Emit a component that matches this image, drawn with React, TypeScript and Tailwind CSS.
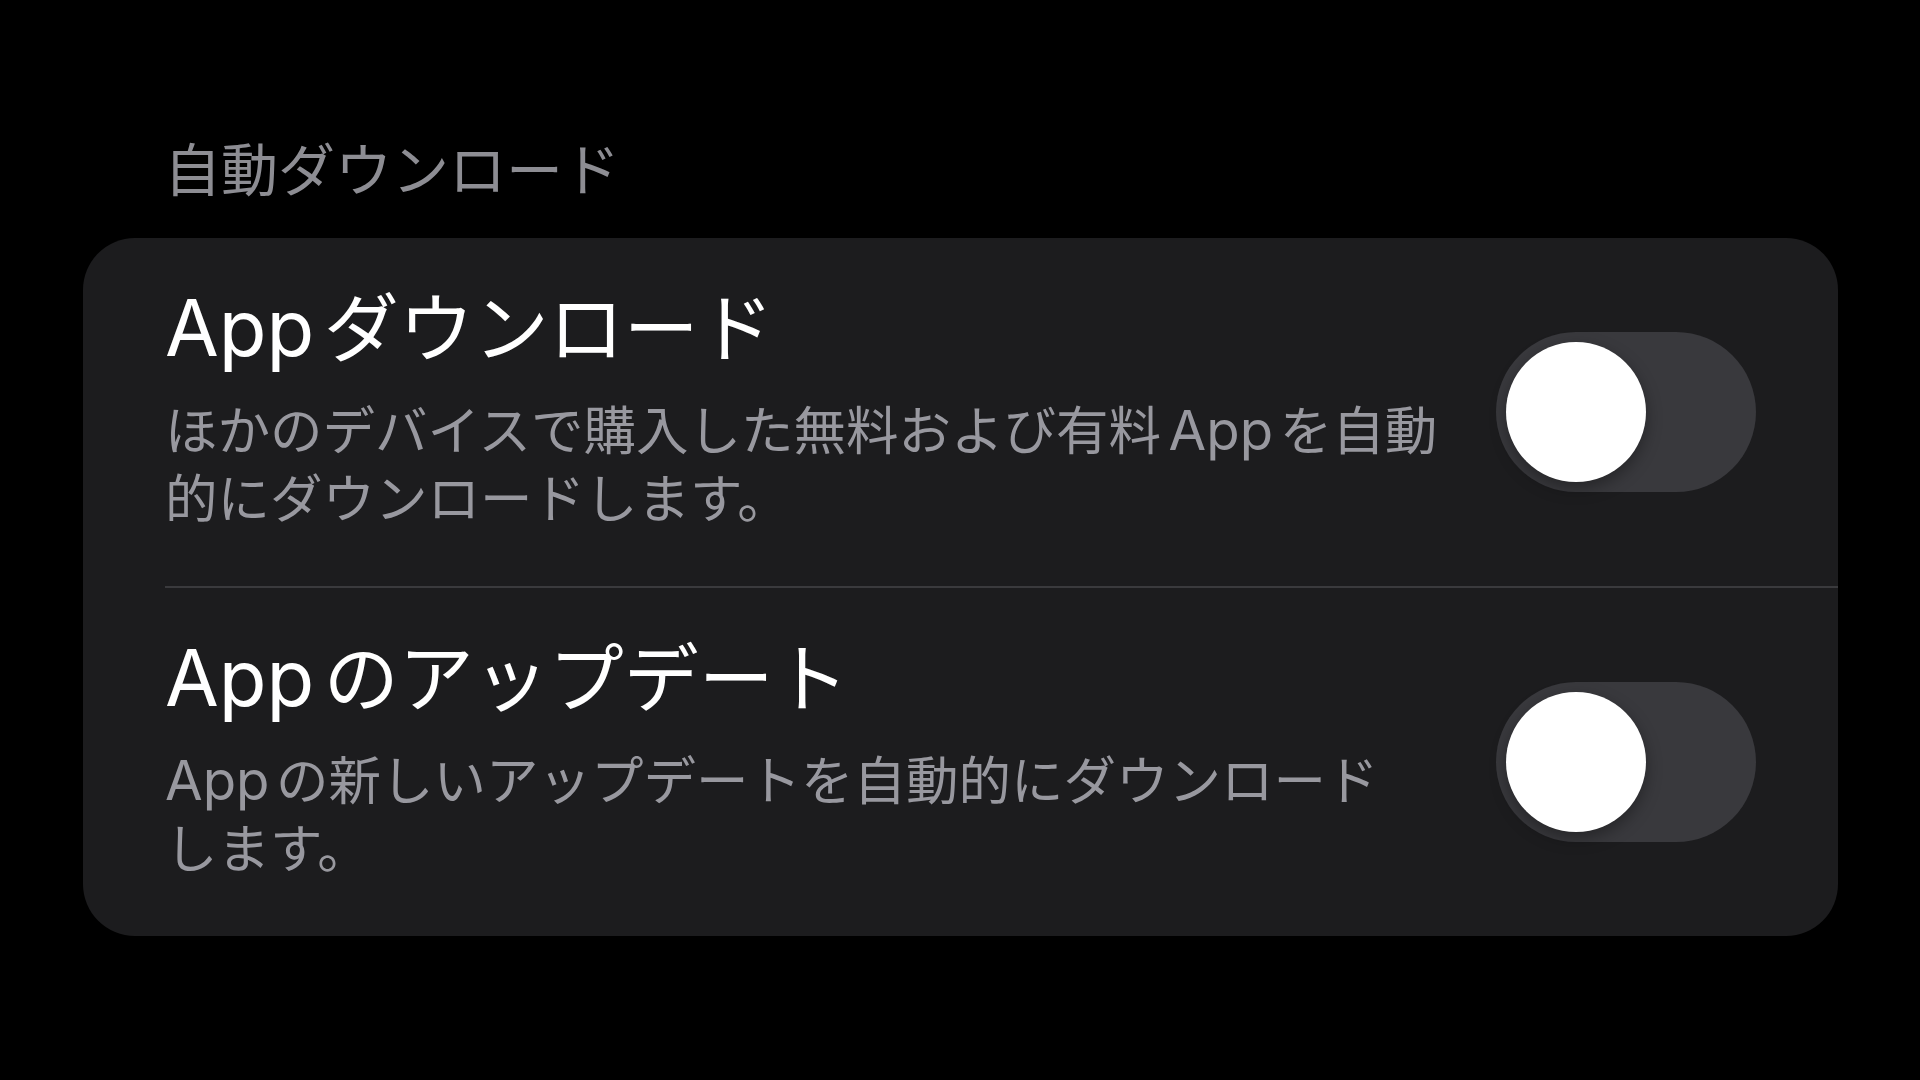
import { useState } from 'react';

interface ToggleRowProps {
  title: React.ReactNode;
  lines: React.ReactNode[];
  on: boolean;
  onToggle: () => void;
  last?: boolean;
}

// Latin "App" inside Japanese text gets a little breathing room, like iOS does
function Latin({ children, lead }: { children: React.ReactNode; lead?: boolean }) {
  return <span className={`mr-[0.12em] text-[1.04em] ${lead ? '' : 'ml-[0.14em]'}`}>{children}</span>;
}

function Toggle({ on, onToggle }: { on: boolean; onToggle: () => void }) {
  return (
    <button
      type="button"
      onClick={onToggle}
      className={`relative flex h-[160px] w-[260px] shrink-0 items-center rounded-full px-[10px] transition-colors ${
        on ? 'justify-end bg-[#30d158]' : 'justify-start bg-[#39393d]'
      }`}
    >
      <span className="block h-[140px] w-[140px] rounded-full bg-white shadow-[0_6px_16px_rgba(0,0,0,0.35)]" />
    </button>
  );
}

function ToggleRow({ title, lines, on, onToggle, last }: ToggleRowProps) {
  return (
    <div className={`flex items-center gap-[30px] pr-[82px] ${last ? '' : 'border-b-2 border-[#3a3a3d]'}`}>
      <div className="flex-1 pt-[47px] pb-[53px]">
        <div className="text-[75px] leading-[86px] text-white">{title}</div>
        <div className="mt-[24px] text-[52.5px] leading-[68px] text-[#98989f]">
          {lines.map((l, i) => (
            <div key={i}>{l}</div>
          ))}
        </div>
      </div>
      <Toggle on={on} onToggle={onToggle} />
    </div>
  );
}

export default function App() {
  const [downloads, setDownloads] = useState(false);
  const [updates, setUpdates] = useState(false);

  return (
    <div
      className="min-h-screen w-full bg-black pt-[142px] pl-[83px] pr-[82px]"
      style={{ fontFamily: 'Inter, "Noto Sans CJK JP", sans-serif' }}
    >
      <div className="mb-[39px] pl-[81px] text-[57px] leading-[57px] text-[#8d8d93]">自動ダウンロード</div>

      <div className="rounded-[52px] bg-[#1c1c1e] pl-[82px]">
        <ToggleRow
          title={
            <>
              <Latin lead>App</Latin>ダウンロード
            </>
          }
          lines={[
            <>
              ほかのデバイスで購入した無料および有料<Latin>App</Latin>を自動
            </>,
            <>的にダウンロードします。</>,
          ]}
          on={downloads}
          onToggle={() => setDownloads((v) => !v)}
        />
        <ToggleRow
          title={
            <>
              <Latin lead>App</Latin>のアップデート
            </>
          }
          lines={[
            <>
              <Latin lead>App</Latin>の新しいアップデートを自動的にダウンロード
            </>,
            <>します。</>,
          ]}
          on={updates}
          onToggle={() => setUpdates((v) => !v)}
          last
        />
      </div>
    </div>
  );
}
